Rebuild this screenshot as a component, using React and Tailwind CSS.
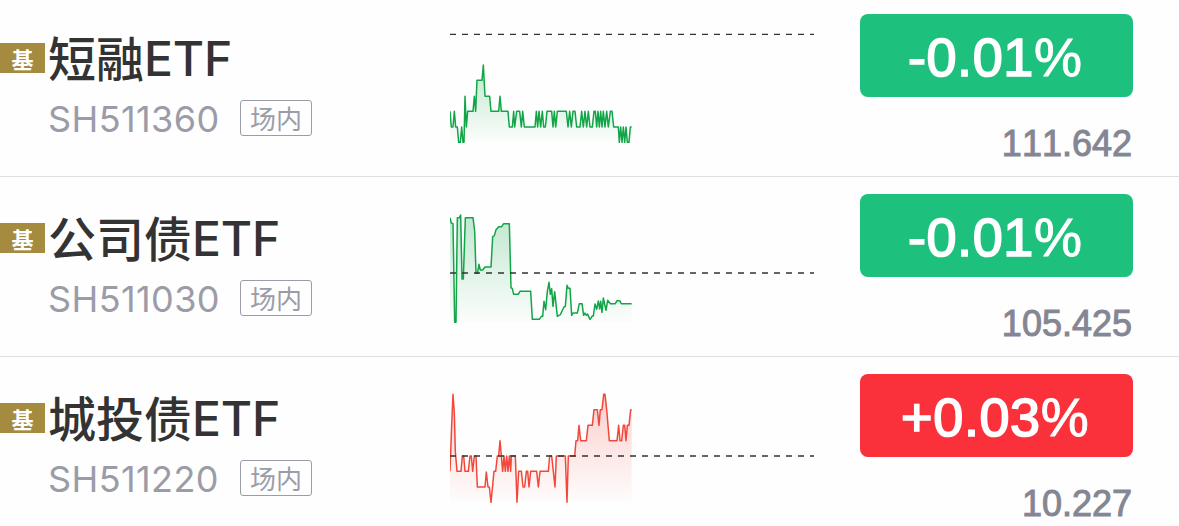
import React from 'react';

// Chart points use a grid of 3 units per pixel, origin at the left edge of the chart
const funds = [
  {
    name: '短融',
    code: 'SH511360',
    change: '-0.01',
    price: '111.642',
    up: false,
    base: 112,
    bottom: 436,
    points: '0,343 4,390 9,390 13,343 17,390 22,390 26,436 31,436 35,390 39,436 42,436 45,298 49,390 53,343 69,343 73,298 77,343 81,250 96,250 100,204 105,298 119,298 123,343 146,343 150,298 154,343 174,343 178,390 187,390 191,343 194,390 200,343 209,343 214,390 218,343 223,390 255,390 259,343 263,390 267,343 272,390 277,343 281,390 286,390 291,343 305,343 309,390 313,343 317,390 322,343 349,343 354,390 359,343 364,390 369,343 375,343 380,390 390,390 395,343 400,390 405,343 410,390 415,343 420,390 427,390 432,343 436,343 440,390 444,343 448,390 452,343 456,390 460,343 465,390 470,343 475,390 481,343 486,343 491,390 505,390 508,436 512,390 516,436 520,390 524,436 528,390 532,436 537,436 541,390 545,390',
  },
  {
    name: '公司债',
    code: 'SH511030',
    change: '-0.01',
    price: '105.425',
    up: false,
    base: 288,
    bottom: 436,
    points: '0,122 4,138 9,140 12,316 14,436 18,436 22,122 28,122 32,114 36,306 40,306 46,122 69,122 74,162 78,289 82,289 87,262 91,279 98,279 105,270 123,270 128,179 133,176 138,158 146,149 155,149 161,140 178,140 183,332 187,335 191,352 205,352 210,343 242,343 247,427 268,427 274,418 278,418 282,373 287,398 292,343 297,316 301,352 305,335 309,388 314,344 322,418 331,413 342,390 346,388 351,325 355,334 360,334 365,415 369,408 382,408 388,380 396,380 401,415 405,408 409,415 413,411 416,419 420,427 427,417 430,417 435,381 440,397 445,372 449,396 452,373 456,406 460,363 468,400 473,370 481,380 496,380 501,371 509,371 514,380 545,380',
  },
  {
    name: '城投债',
    code: 'SH511220',
    change: '+0.03',
    price: '10.227',
    up: true,
    base: 297,
    bottom: 436,
    points: '0,343 5,205 9,112 13,170 16,284 21,343 33,343 37,297 41,297 45,343 55,343 60,297 64,297 68,343 73,297 78,297 82,390 105,390 109,345 114,390 118,390 123,436 132,343 137,343 142,297 146,297 150,251 154,297 158,343 162,297 166,343 170,297 174,343 178,297 182,343 184,297 196,297 201,436 206,343 214,343 219,390 224,390 229,343 233,343 237,390 242,343 260,343 265,390 270,343 295,343 299,297 305,297 310,343 315,390 319,297 346,297 351,436 355,297 374,297 378,251 383,251 387,205 392,251 409,251 414,205 427,205 432,158 442,158 447,205 451,158 456,158 461,112 465,112 470,158 478,251 501,251 506,205 510,251 515,251 520,205 524,205 528,251 532,205 537,205 542,158 545,158',
  },
];

function Sparkline({ fund }) {
  const color = fund.up ? '#f2483c' : '#12a548';
  const id = `fill-${fund.code}`;
  return (
    <svg className="h-[180px] w-[364px] shrink-0" viewBox="0 0 1092 540" fill="none">
      <defs>
        <linearGradient id={id} x1="0" y1="0" x2="0" y2="1">
          <stop offset="0" stopColor={color} stopOpacity="0.26" />
          <stop offset="1" stopColor={color} stopOpacity="0.01" />
        </linearGradient>
      </defs>
      <polygon points={`0,${fund.bottom} ${fund.points} 545,${fund.bottom}`} fill={`url(#${id})`} />
      <polyline points={fund.points} stroke={color} strokeWidth="4.5" strokeLinejoin="round" />
      <path d={`M0 ${fund.base}H1092`} stroke="#333333" strokeWidth="4.2" strokeDasharray="18 18" />
    </svg>
  );
}

function FundRow({ fund }) {
  return (
    <div className="flex h-[180px] shrink-0 border-b border-[#e0e0e2]">
      <div className="mt-[46px] flex h-[30px] w-[45px] shrink-0 items-center justify-center bg-[#a58b40] pb-px font-['Noto_Sans_CJK_SC',sans-serif] text-[22px] leading-none font-bold text-white">
        基
      </div>

      <div className="w-[405px] shrink-0 pt-[31px] pl-[3px]">
        <div className="flex h-[60px] items-start whitespace-nowrap text-[#333333]">
          <span className="-mt-0.5 font-['Noto_Sans_CJK_SC',sans-serif] text-[48px] leading-[60px] font-medium">{fund.name}</span>
          <span className="mt-px font-[Inter,sans-serif] text-[48px] leading-[60px] font-medium tracking-[-0.2px]">ETF</span>
        </div>
        <div className="mt-3 flex h-9 items-center">
          <span className="w-[192px] pt-0.5 font-[Inter,sans-serif] text-[36px] leading-9 tracking-[0.4px] text-[#9b9ca8]">
            {fund.code}
          </span>
          <span className="flex h-9 w-[72px] items-center justify-center rounded-[3px] border border-[#9b9ca8] font-['Noto_Sans_CJK_SC',sans-serif] text-[26px] leading-none text-[#9b9ca8]">
            场内
          </span>
        </div>
      </div>

      <Sparkline fund={fund} />

      <div className="mr-[46px] ml-auto flex w-[273.5px] shrink-0 flex-col pt-[16.5px] font-['Liberation_Sans',sans-serif] [font-kerning:none]">
        <div
          className={`flex h-[83.5px] items-center justify-center rounded-lg pt-[3px] pr-0.5 text-[54px] leading-none tracking-[0.6px] text-white ${fund.up ? 'bg-[#fa303b]' : 'bg-[#1ec07e]'}`}
        >
          <span className="[-webkit-text-stroke:1.7px_white]">{fund.change}</span>
          <span className="[-webkit-text-stroke:0.9px_white]">%</span>
        </div>
        <div className="mt-[29px] pr-px text-right text-[36px] leading-9 text-[#858694] [-webkit-text-stroke:1px_#858694]">{fund.price}</div>
      </div>
    </div>
  );
}

export default function App() {
  return (
    <div className="h-[526px] w-[1179px] overflow-hidden bg-[#fefefe]">
      <div className="-mt-[3px] flex flex-col">
        {funds.map((fund) => (
          <FundRow key={fund.code} fund={fund} />
        ))}
      </div>
    </div>
  );
}
